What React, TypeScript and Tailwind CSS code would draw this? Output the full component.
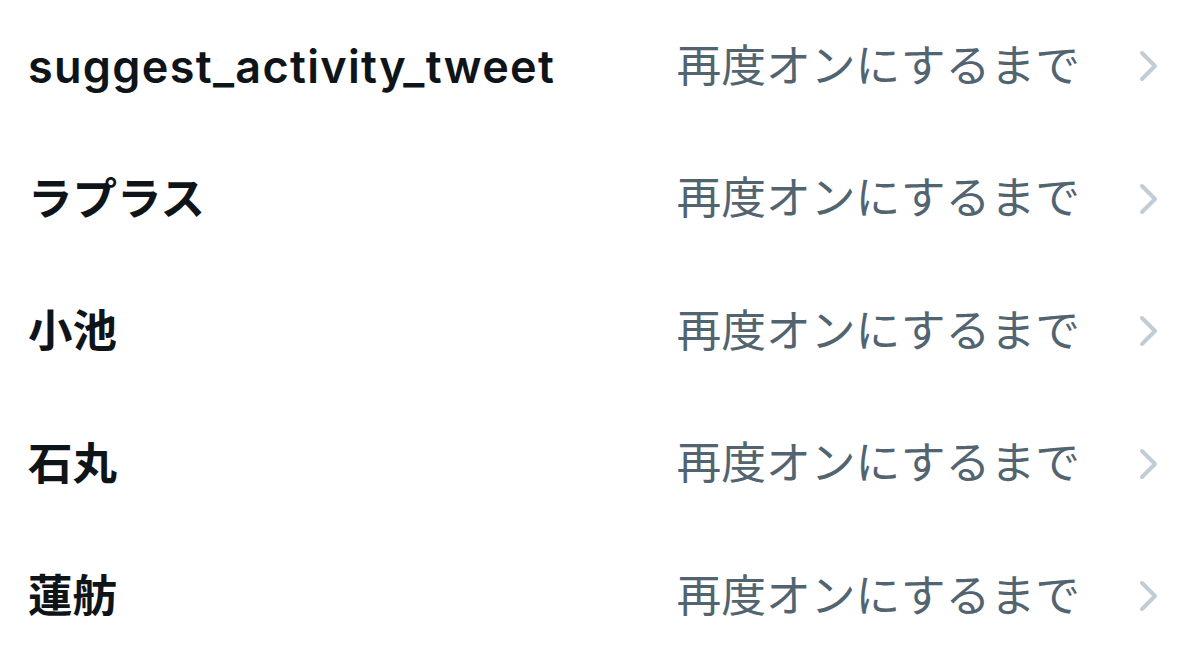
const rows = ["suggest_activity_tweet", "ラプラス", "小池", "石丸", "蓮舫"];

function Chevron() {
  return (
    <svg width="22" height="32" viewBox="0 0 22 32" fill="none" className="shrink-0">
      <path d="M4 3 L17 16 L4 29" stroke="#c2ccd4" strokeWidth="4" strokeLinecap="round" strokeLinejoin="round" />
    </svg>
  );
}

function Label({ name }: { name: string }) {
  const latin = /^[\x00-\x7f]+$/.test(name);
  return latin ? (
    <div className="flex-1 text-[45px] font-semibold text-[#0f1419] leading-none tracking-[1.3px]">{name}</div>
  ) : (
    <div className="flex-1 text-[44.5px] font-bold text-[#0f1419] leading-none">{name}</div>
  );
}

export default function App() {
  return (
    <div
      className="w-[1200px] h-[648px] overflow-hidden bg-white"
      style={{ fontFamily: 'Inter, "Noto Sans CJK JP", sans-serif' }}
    >
      {rows.map((name) => (
        <div key={name} className="h-[132.5px] flex items-center pl-[28px] pr-[40px]">
          <Label name={name} />
          <div className="text-[44.8px] text-[#536471] leading-none mr-[58px]">再度オンにするまで</div>
          <Chevron />
        </div>
      ))}
    </div>
  );
}
